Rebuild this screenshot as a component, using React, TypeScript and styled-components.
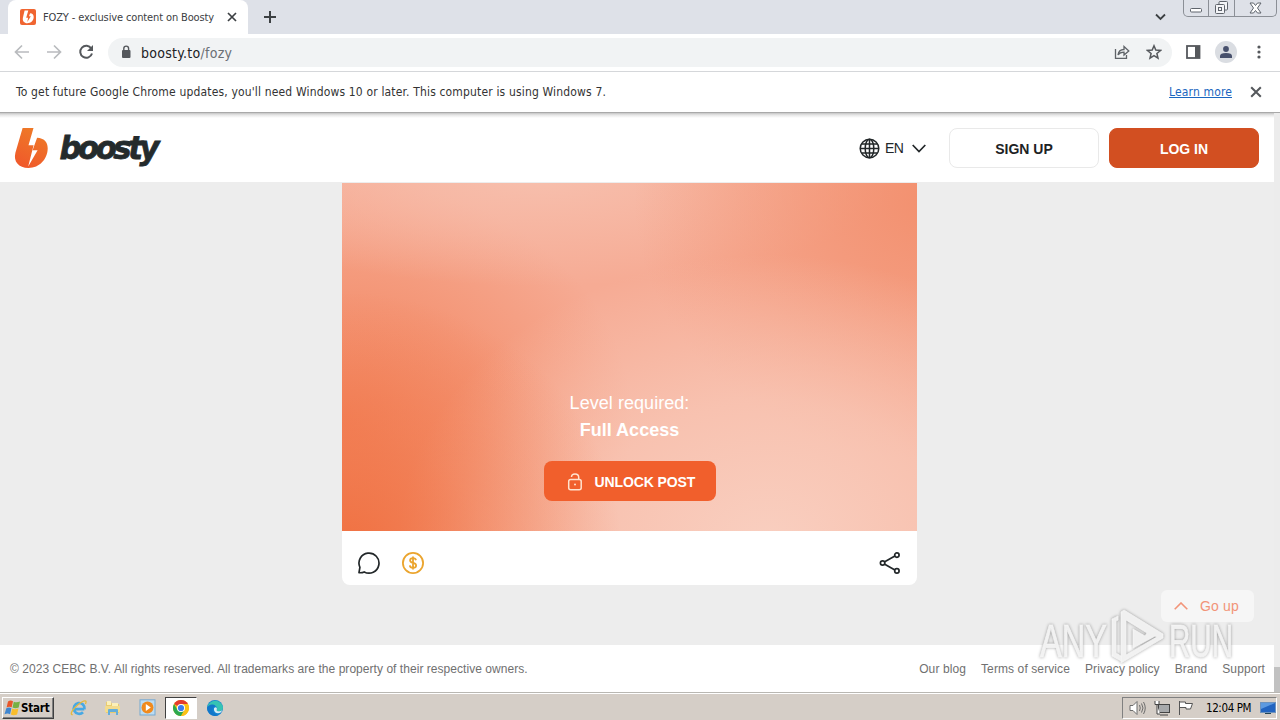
import React from 'react';
import styled, { createGlobalStyle, css } from 'styled-components';

const GlobalStyle = createGlobalStyle`
  * {
    box-sizing: border-box;
  }
  body {
    margin: 0;
    overflow: hidden;
    font-family: 'Liberation Sans', Arial, sans-serif;
  }
  svg {
    display: block;
    flex: none;
  }
`;

const systemFont = css`
  font-family: 'DejaVu Sans Condensed', 'DejaVu Sans', sans-serif;
  font-stretch: condensed;
  white-space: nowrap;
`;

const Screen = styled.div`
  width: 1280px;
  height: 720px;
  display: flex;
  flex-direction: column;
  position: relative;
  overflow: hidden;
  background: #fff;
`;

const TabStrip = styled.div`
  height: 34px;
  flex: none;
  display: flex;
  padding-left: 8px;
  background: #dee1e8;
`;

const Tab = styled.div`
  width: 240px;
  height: 34px;
  padding: 0 11px 0 12px;
  display: flex;
  align-items: center;
  background: #fff;
  border-radius: 8px 8px 0 0;
`;

const TabTitle = styled.span`
  ${systemFont}
  flex: 1;
  margin-left: 7px;
  font-size: 11px;
  letter-spacing: -0.13px;
  color: #3c4043;
`;

const NewTab = styled.div`
  flex: 1;
  padding: 11px 0 0 16px;
`;

const TabSearch = styled.div`
  width: 28px;
  padding-top: 13px;
`;

const WindowControls = styled.div`
  width: 94px;
  height: 17px;
  margin-right: 3px;
  display: flex;
  border: 1px solid #8b8f96;
  border-top: 0;
  border-radius: 0 0 5px 5px;
`;

const WindowButton = styled.div<{ $width: number }>`
  width: ${({ $width }) => $width}px;
  display: flex;
  align-items: center;
  justify-content: center;

  & + & {
    border-left: 1px solid #8b8f96;
  }
`;

const Toolbar = styled.div`
  height: 38px;
  flex: none;
  display: flex;
  align-items: center;
  padding: 0 13px 1px 14px;
  border-bottom: 1px solid #d5d7da;
`;

const NavIcons = styled.div`
  width: 94px;
  display: flex;
  gap: 16px;
`;

const AddressBar = styled.div`
  width: 1064px;
  height: 29px;
  padding: 0 10px 0 12px;
  display: flex;
  align-items: center;
  border-radius: 15px;
  background: #f1f3f4;
`;

const Url = styled.span`
  ${systemFont}
  flex: 1;
  margin-left: 9px;
  padding-top: 1px;
  font-size: 14px;
  letter-spacing: 0.27px;
  color: #202124;

  span {
    color: #6b6f74;
  }
`;

const AddressActions = styled.div`
  display: flex;
  gap: 16px;
`;

const BrowserActions = styled.div`
  flex: 1;
  display: flex;
  align-items: center;
  justify-content: space-between;
  padding-left: 14px;
`;

const Avatar = styled.div`
  width: 22px;
  height: 22px;
  display: flex;
  align-items: center;
  justify-content: center;
  border-radius: 50%;
  background: #dadde2;
`;

const InfoBar = styled.div`
  ${systemFont}
  height: 41px;
  flex: none;
  display: flex;
  align-items: center;
  padding: 0 18px 1px 16px;
  border-bottom: 1px solid #a9a9a9;
  font-size: 12px;
  color: #333;
`;

const InfoMessage = styled.span`
  flex: 1;
  letter-spacing: 0.16px;
`;

const LearnMore = styled.a`
  margin-right: 18px;
  letter-spacing: 0.14px;
  color: #1a66c0;
  text-decoration: underline;
`;

const Viewport = styled.div`
  flex: 1;
  min-height: 0;
  display: flex;
  background: #ededed;
`;

const Page = styled.div`
  width: 1274px;
  display: flex;
  flex-direction: column;
`;

const Scrollbar = styled.div`
  width: 6px;
  display: flex;
  flex-direction: column;
  justify-content: flex-end;
  background: #ececec;
`;

const ScrollThumb = styled.div`
  height: 25px;
  background: #c1c1c1;
`;

const Header = styled.header`
  height: 69px;
  flex: none;
  display: flex;
  align-items: center;
  padding: 1px 15px 0 14px;
  background: linear-gradient(#c4c4c4 0, #e6e6e6 2px, #fff 5px);
`;

const Brand = styled.div`
  flex: 1;
`;

const Language = styled.div`
  width: 90px;
  display: flex;
  align-items: center;
  font-size: 14px;
  letter-spacing: -0.5px;
  color: #222729;

  span {
    width: 27px;
    margin-left: 5px;
  }
`;

const HeaderButton = styled.button<{ $primary?: boolean }>`
  width: 150px;
  height: 40px;
  padding: 2px 0 0;
  margin-right: ${({ $primary }) => ($primary ? 0 : 10)}px;
  border: 1px solid ${({ $primary }) => ($primary ? '#d24f21' : '#e9e9e9')};
  border-radius: 8px;
  background: ${({ $primary }) => ($primary ? '#d24f21' : '#fff')};
  color: ${({ $primary }) => ($primary ? '#fff' : '#1d2224')};
  font: bold 14px 'Liberation Sans', Arial, sans-serif;
`;

const Main = styled.main`
  flex: 1;
  display: flex;
  justify-content: center;
  align-items: flex-start;
  padding: 1px 15px 0 0;
`;

const Post = styled.article`
  width: 575px;
  height: 402px;
  border-radius: 0 0 8px 8px;
  overflow: hidden;
  background: #fff;
`;

const Teaser = styled.div`
  height: 348px;
  display: flex;
  flex-direction: column;
  align-items: center;
  justify-content: flex-end;
  padding-bottom: 30px;
  color: #fff;
  font-size: 18px;
  line-height: 27px;
  background:
    radial-gradient(ellipse 280px 260px at 0% 106%, #f07040 0%, #f0704070 50%, #f0704000 100%),
    radial-gradient(ellipse 370px 290px at 74% 104%, #f9cfc0 0%, #f9cfc0a0 50%, #f9cfc000 100%),
    radial-gradient(ellipse 300px 260px at 103% 5%, #f28a66d0 0%, #f28a6668 50%, #f28a6600 100%),
    radial-gradient(ellipse 360px 110px at 34% -2%, #f7bfad 0%, #f7bfad80 50%, #f7bfad00 100%),
    radial-gradient(ellipse 290px 240px at 0% 68%, #f27f56d0 0%, #f27f567c 50%, #f27f5600 100%),
    #f6ab94;
`;

const LevelLabel = styled.div`
  letter-spacing: 0.05px;
`;

const LevelName = styled.div`
  margin-bottom: 17px;
  font-weight: bold;
`;

const UnlockButton = styled.button`
  width: 172px;
  height: 40px;
  display: flex;
  align-items: center;
  padding: 2px 0 0 23px;
  gap: 12px;
  border: 0;
  border-radius: 8px;
  background: #f15f2c;
  color: #fff;
  font: bold 14px 'Liberation Sans', Arial, sans-serif;
  letter-spacing: -0.1px;
`;

const PostActions = styled.div`
  height: 54px;
  display: flex;
  align-items: center;
  padding: 10px 15px 0;
  gap: 20px;

  svg:last-child {
    margin-left: auto;
  }
`;

const Footer = styled.footer`
  height: 47px;
  flex: none;
  display: flex;
  align-items: center;
  padding: 0 9px 0 10px;
  background: #fff;
  font-size: 12px;
  color: #707070;
  white-space: nowrap;
`;

const Copyright = styled.span`
  flex: 1;
  letter-spacing: 0.045px;
`;

const FooterLinks = styled.nav`
  display: flex;
  gap: 15px;
  letter-spacing: 0.1px;
`;

const GoUp = styled.div`
  position: absolute;
  left: 1161px;
  top: 590px;
  width: 93px;
  height: 32px;
  display: flex;
  align-items: center;
  padding-left: 13px;
  gap: 12px;
  border-radius: 6px;
  background: #f6f6f6;
  color: #f29478;
  font-size: 14px;
  letter-spacing: 0.15px;
`;

const Watermark = styled.svg`
  position: absolute;
  left: 1030px;
  top: 600px;
  filter: drop-shadow(0 0 1.5px rgba(0, 0, 0, 0.38));
`;

const Taskbar = styled.div`
  height: 28px;
  flex: none;
  display: flex;
  align-items: center;
  padding: 2px 3px 0 2px;
  border-top: 1px solid #b9b7b2;
  box-shadow: inset 0 1px #fff;
  background: #d5cec7;
`;

const StartButton = styled.div`
  ${systemFont}
  width: 52px;
  height: 22px;
  display: flex;
  align-items: center;
  padding-left: 1px;
  border: 1px solid;
  border-color: #fff #404040 #404040 #fff;
  box-shadow: inset -1px -1px #808080;
  font-size: 11.5px;
  font-weight: bold;
  letter-spacing: -0.2px;
  color: #000;
`;

const QuickLaunch = styled.div`
  flex: 1;
  display: flex;
  align-items: center;
  padding-left: 7px;
`;

const TaskItem = styled.div<{ $active?: boolean }>`
  width: 32px;
  height: 22px;
  margin-left: 2px;
  display: flex;
  align-items: center;
  justify-content: center;
  border: 1px solid transparent;
  ${({ $active }) =>
    $active &&
    css`
      border-color: #404040 #fff #fff #404040;
      background: #fff;
    `}
`;

const Tray = styled.div`
  ${systemFont}
  height: 22px;
  width: 155px;
  display: flex;
  align-items: center;
  padding: 0 0 0 6px;
  gap: 8px;
  border: 1px solid;
  border-color: #808080 #fff #fff #808080;
  font-size: 11.5px;
  color: #000;

  span {
    flex: 1;
    margin-left: 4px;
    letter-spacing: -0.4px;
  }
`;

const CloseIcon = ({ size, color }: { size: number; color: string }) => (
  <svg width={size} height={size} viewBox="0 0 10 10" stroke={color} strokeWidth="1.7">
    <path d="M1 1l8 8M9 1L1 9" />
  </svg>
);

const BoostyFavicon = () => (
  <svg width="16" height="16" viewBox="0 0 16 16">
    <rect width="16" height="16" rx="2" fill="#f06531" />
    <path
      d="M4.600 1.500L2.900 8.800C2.300 12 4.200 14.300 7.300 14.300c3.600 0 6.400-2.700 6.400-6.200 0-2.400-1.300-3.800-3.600-3.900L9 7.200h1.800L7.300 13l.8-4.200H6.200L8.300 1.500z"
      fill="#fff"
    />
  </svg>
);

const BoostyLogo = () => (
  <svg width="150" height="44" viewBox="0 0 150 44" overflow="visible">
    <defs>
      <linearGradient id="mark" x1="0.7" y1="0" x2="0.3" y2="1">
        <stop offset="0" stopColor="#ee7b27" />
        <stop offset="1" stopColor="#f0592b" />
      </linearGradient>
    </defs>
    <path
      d="M8.600 2H19.500L14.500 19.300H19.600L14.200 40.600L23.600 24.300H18.600L23.100 11.800C30 12.200 33.700 16 33.700 22.300C33.700 33 25.500 42 14.500 42C4.500 42-.8 35.500 1.400 26.800Z"
      fill="url(#mark)"
    />
    <text
      x="47.500"
      y="33.500"
      transform="scale(0.96 1)"
      textLength="104"
      lengthAdjust="spacing"
      fontFamily="'DejaVu Sans', sans-serif"
      fontSize="32"
      fontWeight="bold"
      fontStyle="oblique"
      fill="#242b2c"
      stroke="#242b2c"
      strokeWidth="0.8"
    >
      boosty
    </text>
  </svg>
);

const GlobeIcon = () => (
  <svg width="21" height="21" viewBox="0 0 21 21" fill="none" stroke="#222729" strokeWidth="1.5">
    <circle cx="10.500" cy="10.500" r="9.300" />
    <ellipse cx="10.500" cy="10.500" rx="4.300" ry="9.300" />
    <path d="M10.500 1v19M1 10.500h19M2.500 6h16M2.500 15h16" />
  </svg>
);

const WindowsFlag = () => (
  <svg width="17" height="16" viewBox="0 0 17 16">
    <path d="M4 1.500Q6.500-.2 9 1.300L7.700 7.300Q5.200 6 2.600 7.400z" fill="#e8562a" />
    <path d="M9.800 1.700Q12.500 3 16 1.500L14.700 7.500Q11.500 9 8.500 7.600z" fill="#76b043" />
    <path d="M2.300 8.300Q5 6.900 7.400 8.200L6.100 14.200Q3.500 12.900.5 14.300z" fill="#3f86d0" />
    <path d="M8.200 8.600Q11 9.900 14.400 8.400L13.100 14.400Q9.600 15.900 6.900 14.600z" fill="#f8bd2c" />
  </svg>
);

const ExplorerIcon = () => (
  <svg width="18" height="18" viewBox="0 0 18 18" fill="none">
    <path d="M14.300 10.200H5.200M14.500 10.200A5.400 5.400 0 1 0 13 13.200" stroke="#48a9e4" strokeWidth="2.700" />
    <path d="M2.700 15.500C-1 16 3 9.500 8.500 5.200S17.500.5 15.500 5" stroke="#e5b93c" strokeWidth="1.300" />
  </svg>
);

const FolderIcon = () => (
  <svg width="18" height="18" viewBox="0 0 18 18">
    <path d="M2 3h5l1 2h7v9H2z" fill="#e9cc70" />
    <path d="M3 2h4v4H3zM8 4h6v4H8z" fill="#fbf0b9" />
    <path d="M1 7h15v6H1z" fill="#f3dc8e" />
    <path d="M4 16v-5q0-1 1-1h8q1 0 1 1v5h-2v-3H6v3z" fill="#65aeda" />
  </svg>
);

const MediaPlayerIcon = () => (
  <svg width="17" height="17" viewBox="0 0 17 17">
    <rect x="1" y=".8" width="15" height="15.200" fill="#bcdcf2" stroke="#77a9d1" />
    <circle cx="8.500" cy="8.500" r="6" fill="#f08a1d" />
    <path d="M6.800 5l5 3.500-5 3.500z" fill="#fff" />
  </svg>
);

const ChromeIcon = () => (
  <svg width="16" height="16" viewBox="0 0 16 16">
    <circle cx="8" cy="8" r="8" fill="#fbc116" />
    <path d="M8 8L1.070 4A8 8 0 0 1 14.930 4z" fill="#e33b2e" />
    <path d="M8 8L4.500 10 1.070 4A8 8 0 0 0 8 16l3.500-6z" fill="#2da94f" />
    <path d="M8 4h6.930A8 8 0 0 1 8 16l3.460-6z" fill="#fbc116" />
    <circle cx="8" cy="8" r="4" fill="#fff" />
    <circle cx="8" cy="8" r="3.100" fill="#3b7ded" />
  </svg>
);

const EdgeIcon = () => (
  <svg width="16" height="16" viewBox="0 0 16 16">
    <circle cx="8" cy="8" r="8" fill="#1483d2" />
    <path d="M.3 7A8 8 0 0 1 16 7.500c0 2.700-2 3.800-4.200 3.800-2 0-2.500-.8-2-1.500C11 8 9.500 5.500 6.500 5.500 3.500 5.500.6 6.500.3 7z" fill="#36c3b3" />
    <path d="M.1 8C1 4.500 6 3.500 8.600 6c-2.800.3-4.100 3-2.700 5.700 1 2 3 3 5.300 3.600A8 8 0 0 1 .1 8z" fill="#1277c9" />
    <path d="M8.300 7.200c1.500 0 2 1.300 1.400 2.600-.5.800.8 1.700 2.600 1.500 1.200-.1 2.100-.4 2.900-1-.6 1.800-2.200 3-4.200 3-4.200 0-5.200-5.700-2.700-6.100z" fill="#d9eef5" />
  </svg>
);

const FOOTER_LINKS = ['Our blog', 'Terms of service', 'Privacy policy', 'Brand', 'Support'];

const BrowserChrome = () => (
  <>
    <TabStrip>
      <Tab>
        <BoostyFavicon />
        <TabTitle>FOZY - exclusive content on Boosty</TabTitle>
        <CloseIcon size={10} color="#3c4043" />
      </Tab>
      <NewTab>
        <svg width="12" height="12" viewBox="0 0 12 12" stroke="#3c4043" strokeWidth="2">
          <path d="M6 0v12M0 6h12" />
        </svg>
      </NewTab>
      <TabSearch>
        <svg width="11" height="8" viewBox="0 0 11 8" fill="none" stroke="#3c4043" strokeWidth="1.8">
          <path d="M1 1.500l4.500 4.500L10 1.500" />
        </svg>
      </TabSearch>
      <WindowControls>
        <WindowButton $width={24}>
          <svg width="12" height="16" viewBox="0 0 12 16" fill="#fff" stroke="#5f646c">
            <rect x=".5" y="8.500" width="11" height="3.500" rx="1" />
          </svg>
        </WindowButton>
        <WindowButton $width={26}>
          <svg width="13" height="14" viewBox="0 0 13 14" fill="#f3f4f7" stroke="#5f646c">
            <rect x="4" y=".5" width="8.500" height="8.500" rx="1" />
            <rect x=".5" y="3.500" width="9" height="9" rx="1" />
            <rect x="3.500" y="6.500" width="3" height="3" />
          </svg>
        </WindowButton>
        <WindowButton $width={42}>
          <svg width="13" height="12" viewBox="0 0 13 12" fill="#fff" stroke="#5f646c">
            <path d="M1 1h3.500l2 2.500L8.500 1H12L8.500 6 12 11H8.500l-2-2.500-2 2.500H1L4.500 6z" />
          </svg>
        </WindowButton>
      </WindowControls>
    </TabStrip>
    <Toolbar>
      <NavIcons>
        <svg width="16" height="16" viewBox="0 0 16 16" fill="none" stroke="#b9bbbe" strokeWidth="1.700">
          <path d="M15 8H2M8 1.500L1.500 8 8 14.500" />
        </svg>
        <svg width="16" height="16" viewBox="0 0 16 16" fill="none" stroke="#b9bbbe" strokeWidth="1.700">
          <path d="M1 8h13M8 1.500L14.500 8 8 14.500" />
        </svg>
        <svg width="16" height="16" viewBox="0 0 16 16" fill="none" stroke="#55585c" strokeWidth="2">
          <path d="M13.300 4.500A6 6 0 1 0 14 9.500" />
          <path d="M15 1v6H9z" fill="#55585c" stroke="none" />
        </svg>
      </NavIcons>
      <AddressBar>
        <svg width="12" height="14" viewBox="0 0 12 14">
          <rect x="2" y="5" width="8.500" height="8" rx="1" fill="#55585c" />
          <path d="M3.800 5.500V3.500a2.400 2.400 0 0 1 4.800 0v2" fill="none" stroke="#55585c" strokeWidth="1.400" />
        </svg>
        <Url>
          boosty.to<span>/fozy</span>
        </Url>
        <AddressActions>
          <svg width="16" height="16" viewBox="0 0 16 16" fill="none" stroke="#5f6368" strokeWidth="1.300">
            <path d="M1.500 5v9.300h11V11" />
            <path d="M4 11c.5-4 3-5.500 6-5.500V2.500L14.800 7 10 11V8.200c-2.500 0-4.500.5-6 2.800z" />
          </svg>
          <svg width="16" height="16" viewBox="0 0 16 16" fill="none" stroke="#55585c" strokeWidth="1.500">
            <path d="M8 1.800l1.800 4.300 4.700.4-3.600 3 1.100 4.600L8 11.700l-4 2.400 1.100-4.600-3.600-3 4.700-.4z" />
          </svg>
        </AddressActions>
      </AddressBar>
      <BrowserActions>
        <svg width="15" height="14" viewBox="0 0 15 14">
          <rect x="1" y="1" width="12.500" height="12" fill="none" stroke="#55585c" strokeWidth="1.800" />
          <path d="M9 1h5v12H9z" fill="#55585c" />
        </svg>
        <Avatar>
          <svg width="12" height="12" viewBox="0 0 12 12" fill="#47506c">
            <circle cx="6" cy="3" r="2.900" />
            <path d="M0 12V10q0-3 6-3t6 3v2z" />
          </svg>
        </Avatar>
        <svg width="16" height="16" viewBox="0 0 16 16" fill="#55585c">
          <circle cx="8" cy="3" r="1.600" />
          <circle cx="8" cy="8" r="1.600" />
          <circle cx="8" cy="13" r="1.600" />
        </svg>
      </BrowserActions>
    </Toolbar>
    <InfoBar>
      <InfoMessage>
        To get future Google Chrome updates, you'll need Windows 10 or later. This computer is using
        Windows 7.
      </InfoMessage>
      <LearnMore>Learn more</LearnMore>
      <CloseIcon size={12} color="#55585c" />
    </InfoBar>
  </>
);

const LockedPost = () => (
  <Post>
    <Teaser>
      <LevelLabel>Level required:</LevelLabel>
      <LevelName>Full Access</LevelName>
      <UnlockButton>
        <svg width="16" height="18" viewBox="0 0 16 18" fill="none" stroke="#ffe3cf" strokeWidth="1.500">
          <rect x="1.700" y="6.500" width="12.500" height="10.300" rx="2" />
          <path d="M4.500 4C4.500 2 6 .9 8 .9s3.700 1.300 3.700 3.400v2.200" />
          <circle cx="8" cy="11.500" r="1" fill="#ffe3cf" stroke="none" />
        </svg>
        UNLOCK POST
      </UnlockButton>
    </Teaser>
    <PostActions>
      <svg width="24" height="24" viewBox="0 0 24 24" fill="none" stroke="#222729" strokeWidth="1.700">
        <path d="M2 21.700L2.900 16.300A10 10 0 1 1 7.200 20.900Q5 22 2 21.700z" strokeLinejoin="round" />
      </svg>
      <svg width="24" height="24" viewBox="0 0 24 24" fill="none" stroke="#eba52f" strokeWidth="1.800">
        <circle cx="12" cy="12" r="10.100" />
        <path d="M15 9.200C14.700 7.800 13.500 7.200 12 7.200c-1.700 0-2.900.8-2.900 2.300 0 3.300 6 1.500 6 4.900 0 1.600-1.300 2.400-3.100 2.400s-3-.8-3.200-2.400M12 5.500v13" />
      </svg>
      <svg width="24" height="24" viewBox="0 0 24 24" fill="none" stroke="#222729" strokeWidth="1.700">
        <path d="M6.300 10.900l10.600-6M6.300 13.100l10.600 6" />
        <circle cx="4.600" cy="12" r="2.200" />
        <circle cx="18.900" cy="4.100" r="2.200" />
        <circle cx="18.900" cy="19.900" r="2.200" />
      </svg>
    </PostActions>
  </Post>
);

const App = () => (
  <Screen>
    <GlobalStyle />
    <BrowserChrome />
    <Viewport>
      <Page>
        <Header>
          <Brand>
            <BoostyLogo />
          </Brand>
          <Language>
            <GlobeIcon />
            <span>EN</span>
            <svg width="14" height="9" viewBox="0 0 14 9" fill="none" stroke="#222729" strokeWidth="1.700">
              <path d="M.7 1L7 7.500 13.300 1" />
            </svg>
          </Language>
          <HeaderButton>SIGN UP</HeaderButton>
          <HeaderButton $primary>LOG IN</HeaderButton>
        </Header>
        <Main>
          <LockedPost />
        </Main>
        <Footer>
          <Copyright>
            © 2023 CEBC B.V. All rights reserved. All trademarks are the property of their
            respective owners.
          </Copyright>
          <FooterLinks>
            {FOOTER_LINKS.map((label) => (
              <span key={label}>{label}</span>
            ))}
          </FooterLinks>
        </Footer>
      </Page>
      <Scrollbar>
        <ScrollThumb />
      </Scrollbar>
    </Viewport>
    <Taskbar>
      <StartButton>
        <WindowsFlag />
        Start
      </StartButton>
      <QuickLaunch>
        <TaskItem>
          <ExplorerIcon />
        </TaskItem>
        <TaskItem>
          <FolderIcon />
        </TaskItem>
        <TaskItem>
          <MediaPlayerIcon />
        </TaskItem>
        <TaskItem $active>
          <ChromeIcon />
        </TaskItem>
        <TaskItem>
          <EdgeIcon />
        </TaskItem>
      </QuickLaunch>
      <Tray>
        <svg width="17" height="16" viewBox="0 0 17 16" fill="#fff" stroke="#6d6d6d">
          <path d="M1 5.500h3l4-4v13l-4-4H1z" />
          <path d="M10.500 5q1.500 3 0 6M12.500 3.500q3 4.500 0 9M14.500 2q3.500 6 0 12" fill="none" />
        </svg>
        <svg width="16" height="16" viewBox="0 0 16 16" fill="#fff" stroke="#444">
          <rect x="4.500" y="4.500" width="11" height="8" fill="#a7a9ab" />
          <path d="M6 15h8M1 1v3.500h4V1M3 5v9h3" />
        </svg>
        <svg width="16" height="16" viewBox="0 0 16 16" fill="#fff" stroke="#555">
          <path d="M1.500 1v14M1.500 2h6v1.500h7L12.500 9H8V7.500H1.500z" />
        </svg>
        <span>12:04 PM</span>
        <svg width="16" height="14" viewBox="0 0 16 14">
          <rect x=".5" y="1.500" width="15" height="10" fill="#2264c0" stroke="#6d93be" />
          <path d="M1 2h14L1 8z" fill="#5d9ae0" />
          <path d="M5 12.500h6" stroke="#245" />
        </svg>
      </Tray>
    </Taskbar>
    <GoUp>
      <svg width="14" height="8" viewBox="0 0 14 8" fill="none" stroke="#f29478" strokeWidth="1.600">
        <path d="M.7 7.300L7 1l6.300 6.300" />
      </svg>
      Go up
    </GoUp>
    <Watermark width="215" height="75" viewBox="0 0 215 75" overflow="visible">
      <g
        fill="#f8f8f8"
        fillOpacity="0.9"
        stroke="#f4f4f4"
        strokeOpacity="0.8"
        fontFamily="'Liberation Sans', Arial, sans-serif"
        fontSize="47"
      >
        <text x="10" y="57" textLength="67" lengthAdjust="spacingAndGlyphs">
          ANY
        </text>
        <text x="139" y="57" textLength="64" lengthAdjust="spacingAndGlyphs">
          RUN
        </text>
        <path d="M82 19l6-3v4l-2 1v32l5 3v5l-9-5z" />
        <path
          fillRule="evenodd"
          d="M91 12l3-2 39 24v4L91 63zM96 20v35l31-18-2-1-22 12V29l12 7 2-3z"
        />
      </g>
    </Watermark>
  </Screen>
);

export default App;
